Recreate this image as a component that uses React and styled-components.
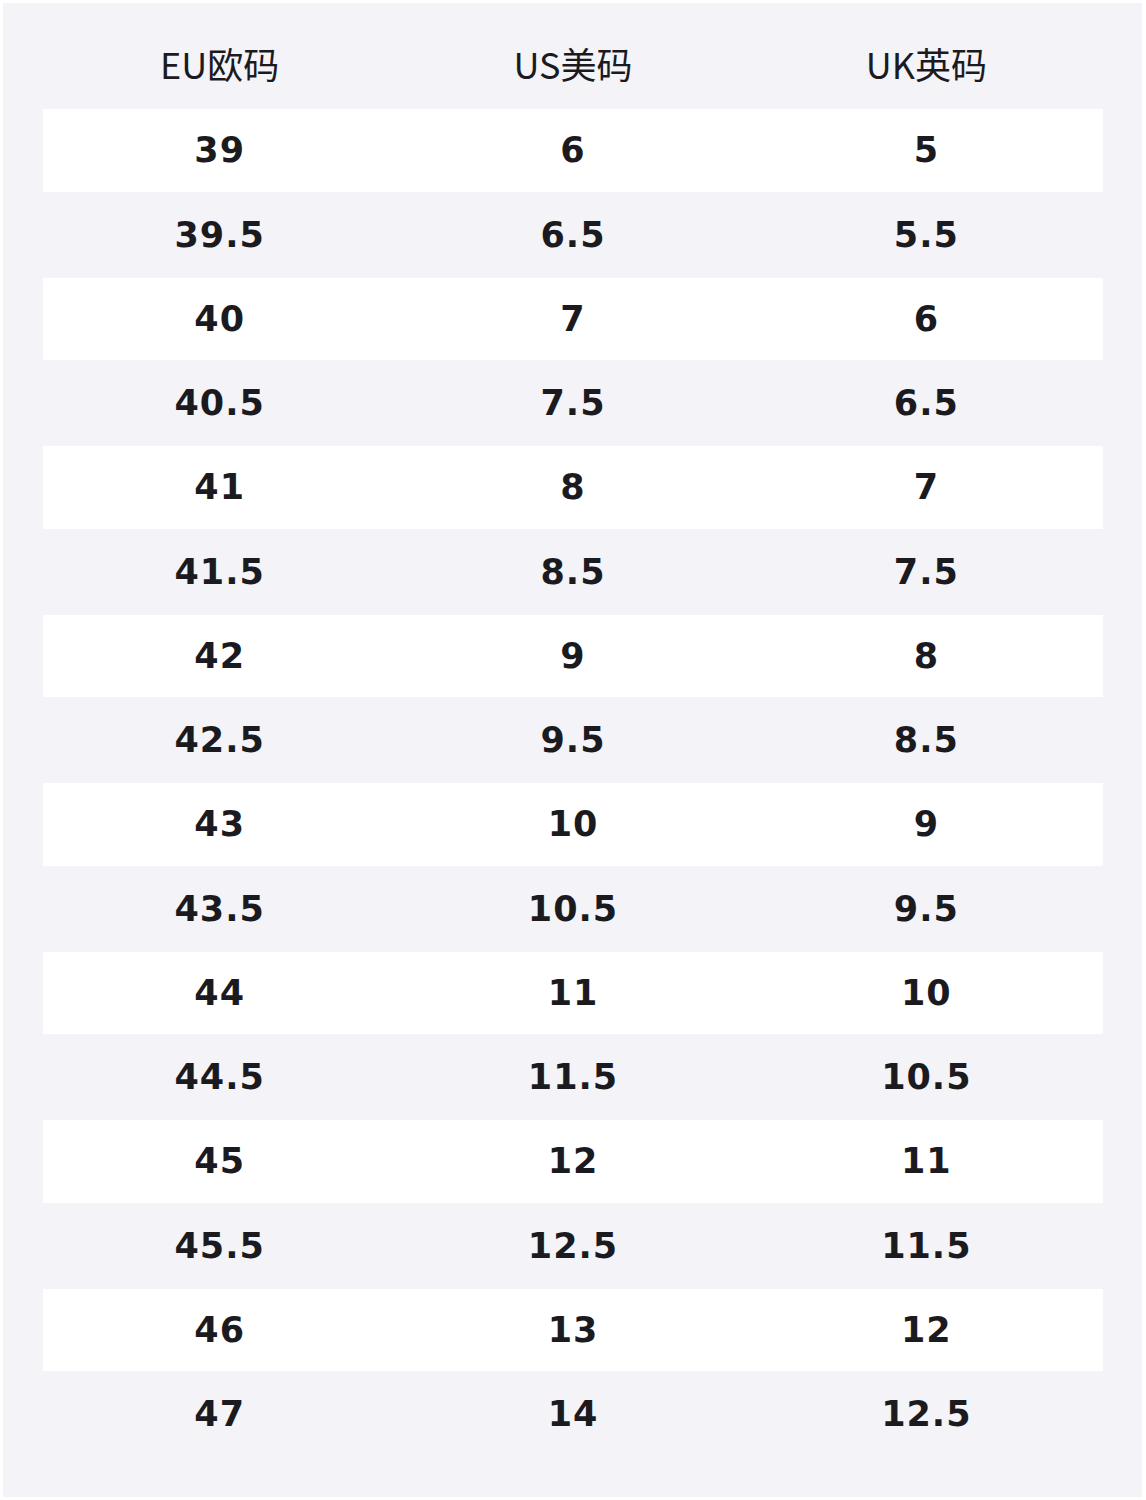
import React from "react";
import styled, { createGlobalStyle } from "styled-components";

const GlobalStyle = createGlobalStyle`
  html, body {
    margin: 0;
    padding: 0;
    background: #ffffff;
  }
`;

const Panel = styled.div`
  margin: 3px 4px 3px 3px;
  width: 1139px;
  height: 1494px;
  box-sizing: border-box;
  background: #f3f3f8;
  padding: 0 39px 0 40px;
  color: #1b1b1f;
`;

const Header = styled.div`
  display: grid;
  grid-template-columns: repeat(3, 1fr);
  height: 106px;
  align-items: center;
`;

const HeadCell = styled.div`
  text-align: center;
  font-family: "Noto Sans CJK SC", "Noto Sans", sans-serif;
  font-size: 36px;
  font-weight: 400;
  padding-top: 14px;
`;

const Row = styled.div`
  display: grid;
  grid-template-columns: repeat(3, 1fr);
  align-items: center;
  height: ${(p) => (p.$light ? "82.5px" : "86px")};
  background: ${(p) => (p.$light ? "#ffffff" : "transparent")};
`;

const Cell = styled.div`
  text-align: center;
  font-family: "DejaVu Sans", sans-serif;
  font-weight: 700;
  font-size: 35px;
  letter-spacing: 1px;
`;

const sizes = [
  ["39", "6", "5"],
  ["39.5", "6.5", "5.5"],
  ["40", "7", "6"],
  ["40.5", "7.5", "6.5"],
  ["41", "8", "7"],
  ["41.5", "8.5", "7.5"],
  ["42", "9", "8"],
  ["42.5", "9.5", "8.5"],
  ["43", "10", "9"],
  ["43.5", "10.5", "9.5"],
  ["44", "11", "10"],
  ["44.5", "11.5", "10.5"],
  ["45", "12", "11"],
  ["45.5", "12.5", "11.5"],
  ["46", "13", "12"],
  ["47", "14", "12.5"],
];

export default function App() {
  return (
    <>
      <GlobalStyle />
      <Panel>
        <Header>
          <HeadCell>EU欧码</HeadCell>
          <HeadCell>US美码</HeadCell>
          <HeadCell>UK英码</HeadCell>
        </Header>
        {sizes.map((r, i) => (
          <Row key={r[0]} $light={i % 2 === 0}>
            {r.map((v, j) => (
              <Cell key={j}>{v}</Cell>
            ))}
          </Row>
        ))}
      </Panel>
    </>
  );
}
